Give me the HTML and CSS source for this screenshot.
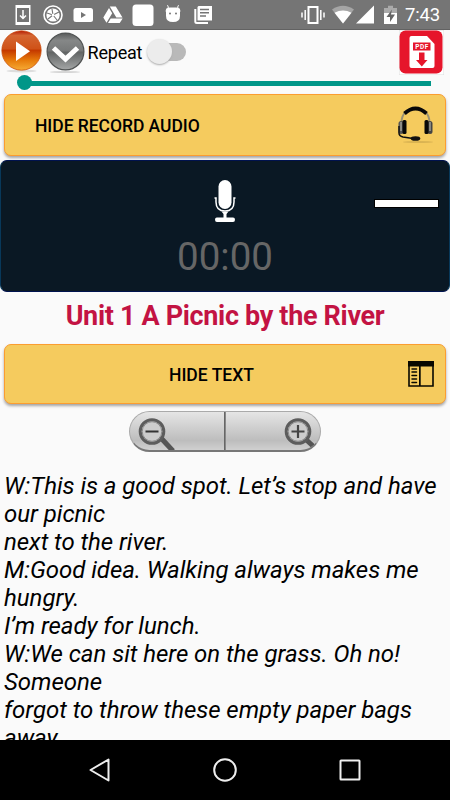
FILE: index.html
```html
<!DOCTYPE html>
<html lang="en">
<head>
<meta charset="utf-8">
<title>Unit 1 A Picnic by the River</title>
<link rel="stylesheet" href="styles.css">
</head>
<body>
<div class="screen">
  <header class="status">
    <div class="notifications">
      <svg viewBox="0 0 30 30"><path d="M7.500 5h15v20h-15zM9 8v14h12V8z" fill="#fff" fill-rule="evenodd"/><path d="M15 10v8M12 15.500l3 3 3-3" fill="none" stroke="#fff" stroke-width="1.500"/></svg>
      <svg viewBox="0 0 30 30"><circle cx="15" cy="15" r="9" fill="none" stroke="#fff" stroke-width="1.600"/><circle cx="15" cy="15" r="6.600" fill="#fff"/><path d="M15 15l-1-6M15 15l6-3M15 15l4 5M15 15l-5 4M15 15l-6-2" stroke="#757575" stroke-width="1.100"/><circle cx="15" cy="15" r="1.300" fill="#fff"/></svg>
      <svg viewBox="0 0 30 30"><rect x="5.500" y="8" width="19.500" height="14" rx="2.500" fill="#fff"/><path d="M13 12v6l5-3z" fill="#757575"/></svg>
      <svg viewBox="0 0 30 30"><path d="M11.800 6.500h6l6.700 11h-6.200zM11 8l3.200 5.300-5.700 9.500-3.200-5.200zM12.700 18.500h12l-3 4.500H10z" fill="#fff"/></svg>
      <svg viewBox="0 0 30 30"><rect x="4.500" y="4.500" width="21" height="21.500" rx="3.500" fill="#fff"/></svg>
      <svg viewBox="0 0 30 30"><path d="M8 11.500q0-3.500 2.500-4l-1-2.300M22 11.500q0-3.500-2.500-4l1-2.300" fill="none" stroke="#fff"/><path d="M8 11q0-3.500 4-3.500h6q4 0 4 3.500v5q0 6-7 6t-7-6z" fill="#fff"/><circle cx="12" cy="13.500" r="1" fill="#757575"/><circle cx="18" cy="13.500" r="1" fill="#757575"/></svg>
      <svg viewBox="0 0 30 30"><path d="M7.300 9v12.500q0 1.500 1.500 1.500H20" fill="none" stroke="#fff" stroke-width="2"/><path d="M10.500 6H24v14.500H9.500V7z" fill="#fff"/><path d="M12 9.500h9M12 12.700h9M12 16h6" stroke="#757575" stroke-width="1.400"/></svg>
    </div>
    <div class="system">
      <svg class="vibrate" viewBox="0 0 24 30"><path d="M7.500 7h9v16h-9z" fill="none" stroke="#fff" stroke-width="2"/><path d="M4.200 10v10M1 12.500v5M19.800 10v10M23 12.500v5" stroke="#fff" stroke-width="1.500"/></svg>
      <svg class="wifi" viewBox="0 0 22 30"><path d="M0 9.500q11-7.500 22 0L11 23.500z" fill="#a5a5a5"/><path d="M2.500 12.700q8.500-4.500 17 0L11 23.500z" fill="#fff"/></svg>
      <svg class="signal" viewBox="0 0 18 30"><path d="M18 5.500v18H0z" fill="#fff"/></svg>
      <svg class="battery" viewBox="0 0 13 30"><path d="M0 8h4V5.800h5V8h4v6H0z" fill="#aaa"/><path d="M0 13h13v11H0z" fill="#fff"/><path d="M8 9.500L2.500 17H6v5l5-7.500H7z" fill="#656565"/></svg>
      <span class="clock">7:43</span>
    </div>
  </header>

  <section class="toolbar">
    <svg class="play" viewBox="0 0 43 43">
      <defs>
        <linearGradient id="orange" x2="0" y2="1"><stop stop-color="#b51b05"/><stop offset=".12" stop-color="#d56632"/><stop offset=".45" stop-color="#cf5218"/><stop offset=".5" stop-color="#c53a00"/><stop offset=".75" stop-color="#e77b0b"/><stop offset="1" stop-color="#f6ac35"/></linearGradient>
        <linearGradient id="gray" x2="0" y2="1"><stop stop-color="#575959"/><stop offset=".2" stop-color="#858787"/><stop offset=".48" stop-color="#777979"/><stop offset=".52" stop-color="#626565"/><stop offset="1" stop-color="#a5a7a7"/></linearGradient>
      </defs>
      <ellipse cx="21.500" cy="41" rx="15" ry="1.500" fill="#ddd"/><circle cx="21.500" cy="20.500" r="19.700" fill="url(#orange)" stroke="#c84a0a" stroke-width=".7"/><path d="M16 11.500v19.500l14-9.700z" fill="#fff"/>
    </svg>
    <svg class="more" viewBox="0 0 43 43"><ellipse cx="22" cy="42" rx="15" ry="1" fill="#d5d5d5"/><circle cx="22.500" cy="21.500" r="18.400" fill="url(#gray)" stroke="#505353" stroke-width="1.200"/><path d="M10.500 18l12 11 12-11" fill="none" stroke="#fff" stroke-width="5"/></svg>
    <span class="repeat">Repeat</span>
    <span class="switch"><span class="knob"></span></span>
    <svg class="pdf" viewBox="0 0 45 45"><path d="M0 0h45v45H0z" fill="#fff" stroke="#ddd"/><rect x=".5" y=".5" width="43" height="43" rx="6" fill="#e6152b"/><path d="M12.500 6h15.500l7.500 8v22q0 2-2 2h-21q-2 0-2-2V8q0-2 2-2z" fill="#fff"/><path d="M14 12.500h17.500v8H14z" fill="#e6152b"/><text x="22.800" y="19" text-anchor="middle" textLength="13" class="pdf-label">PDF</text><path d="M20 22.500h5.500V30h3l-5.700 6.500L17 30h3z" fill="#e6152b"/></svg>
  </section>
  <div class="seek"><span class="thumb"></span><span class="track"></span></div>

  <button class="bar bar-audio"><span>HIDE RECORD AUDIO</span>
    <svg class="headset" viewBox="0 0 38 38"><ellipse cx="21" cy="36" rx="15" ry="1" fill="#d9b352"/><path d="M4.500 17C4-3 33-3 32.500 17" fill="none" stroke="#999173" stroke-width="2"/><path d="M7.500 7.500Q18.500-2.500 29.500 7.500" fill="none" stroke="#080808" stroke-width="3.800"/><rect x="1.500" y="15" width="5" height="13" rx="2.500" fill="#555"/><rect x="5.500" y="14" width="4" height="14" rx="1.500" fill="#080808"/><rect x="30.500" y="15" width="5" height="13" rx="2.500" fill="#444"/><rect x="27.500" y="14" width="4" height="14" rx="1.500" fill="#080808"/><path d="M4 16v9M33 16v9" stroke="#b5b2a5" stroke-width="1.200"/><path d="M2 20v7q0 3 4 4l10 1.500" fill="none" stroke="#111" stroke-width="1.500"/><ellipse cx="18.500" cy="32.500" rx="4.800" ry="2.300" fill="#111"/></svg>
  </button>

  <section class="recorder">
    <svg class="mic" viewBox="0 0 24 44"><rect x="5.500" y="1" width="13" height="29" rx="6.500" fill="#fff"/><path d="M1.500 19h1.500v4q0 9 9 9t9-9v-4h1.500" fill="none" stroke="#fff" stroke-width="1.500"/><path d="M8.500 32.500h7l-2 2.500v3.500H20q2 0 2 2.200T20 43H4q-2 0-2-2.300t2-2.200h6.500V35z" fill="#fff"/></svg>
    <div class="time">00:00</div>
    <span class="level"></span>
  </section>

  <h1>Unit 1 A Picnic by the River</h1>

  <button class="bar bar-text"><span>HIDE TEXT</span>
    <svg class="panel" viewBox="0 0 26 26"><path d="M1 1h24v24H1z" fill="none" stroke="#080800" stroke-width="1.600"/><path d="M0 0h26v5.500H0zM11 5h1.700v20H11z" fill="#080800"/><path d="M4 8h4.500M4 11h4.500M4 14.500h4.500M4 18h4.500M4 21.500h4.500" stroke="#080800" stroke-width="1.500" stroke-linecap="round"/></svg>
  </button>

  <div class="zoom">
    <span class="zoom-out"><svg viewBox="0 0 40 38"><path d="M26 26l12 13" stroke="#555" stroke-width="5"/><circle cx="17" cy="19.500" r="11.800" fill="#ccc" stroke="#5c5c5c" stroke-width="3"/><circle cx="17" cy="19.500" r="9.800" fill="none" stroke="#888"/><path d="M10.500 19.500h13" stroke="#333" stroke-width="2.200"/></svg></span>
    <span class="zoom-in"><svg viewBox="0 0 40 38"><path d="M26.500 28l7.500 7" stroke="#555" stroke-width="5"/><circle cx="18" cy="19.500" r="11.800" fill="#ccc" stroke="#5c5c5c" stroke-width="3"/><circle cx="18" cy="19.500" r="9.800" fill="none" stroke="#888"/><path d="M11.500 19.500h13M18 13v13" stroke="#444" stroke-width="2.200"/></svg></span>
  </div>

  <main class="dialogue">
    <div>W:This is a good spot. Let’s stop and have</div>
    <div>our picnic</div>
    <div>next to the river.</div>
    <div>M:Good idea. Walking always makes me</div>
    <div>hungry.</div>
    <div>I’m ready for lunch.</div>
    <div>W:We can sit here on the grass. Oh no!</div>
    <div>Someone</div>
    <div>forgot to throw these empty paper bags</div>
    <div>away.</div>
  </main>

  <nav>
    <svg viewBox="0 0 30 30"><path d="M23.500 4.500v21L5.500 15z" fill="none" stroke="#eee" stroke-width="2" stroke-linejoin="round"/></svg>
    <svg viewBox="0 0 30 30"><circle cx="15" cy="15" r="10.800" fill="none" stroke="#eee" stroke-width="2"/></svg>
    <svg viewBox="0 0 30 30"><rect x="5.500" y="5.500" width="19" height="19" rx=".5" fill="none" stroke="#eee" stroke-width="2"/></svg>
  </nav>
</div>
</body>
</html>
```
FILE: styles.css
```css
* { box-sizing: border-box; }
body { margin: 0; font-family: Roboto, sans-serif; color: #000; }
svg { display: block; flex: none; }
.screen { width: 450px; height: 800px; overflow: hidden; display: flex; flex-direction: column; background: #fafafa; }
.status { height: 30px; flex: none; display: flex; justify-content: space-between; background: #757575; border-bottom: 1px solid #626262; padding: 0 11px 0 7.5px; }
.notifications, .system { display: flex; height: 30px; }
.notifications svg { width: 30px; height: 30px; }
.system svg { height: 30px; }
.vibrate { width: 24px; margin-right: 7px; }
.wifi { width: 22px; margin-right: 2px; }
.signal { width: 18px; margin-right: 10px; }
.battery { width: 13px; margin-right: 8px; }
.clock { width: 34px; color: #fff; font-size: 18.5px; line-height: 31px; white-space: nowrap; letter-spacing: -.2px; }

.toolbar { height: 44px; flex: none; display: flex; align-items: flex-start; padding-right: 6px; }
.play, .more { width: 43px; height: 43px; }
.repeat { width: 58px; margin-left: 1.5px; font-size: 18px; line-height: 46px; white-space: nowrap; letter-spacing: -.2px; }
.switch { width: 36px; height: 18px; margin: 12.5px 0 0 4px; border-radius: 9px; background: #b9b9b9; }
.knob { display: block; width: 25px; height: 25px; margin: -3.5px 0 0 -3px; border-radius: 50%; background: #ececec; box-shadow: 0 1px 2px #aaa; }
.pdf { width: 45px; height: 45px; margin-left: auto; }
.pdf-label { font: bold 6.5px Roboto, sans-serif; fill: #fff; }
.seek { height: 20px; flex: none; display: flex; align-items: center; padding: 0 19px 3px 16.5px; }
.thumb { width: 15px; height: 15px; border-radius: 50%; background: #009688; }
.track { flex: 1; height: 5px; margin: 2px 0 0 -1px; background: #009688; }

.bar { flex: none; display: flex; align-items: center; margin: 0 4px; border: 1px solid #fb9d30; border-radius: 7px; background: #f5cb5e; box-shadow: 0 2px 3px rgba(0,0,0,.35); font: 500 17.5px Roboto, sans-serif; color: #000; padding: 0; white-space: nowrap; }
.bar span { padding-top: 2px; }
.bar-audio { height: 62px; justify-content: space-between; padding: 0 10px 0 30px; letter-spacing: -.05px; }
.bar-text { height: 60px; justify-content: space-between; padding: 0 11px 0 164px; }
.headset { width: 38px; height: 38px; }
.panel { width: 26px; height: 26px; }

.recorder { height: 132px; flex: none; margin-top: 4px; padding: 18px 10px 0; display: grid; grid-template-columns: 1fr 120px 1fr; grid-template-rows: 44px 1fr; background: #0a1824; border: 1px solid #00124e; border-left-color: #08385a; border-right-color: #08385a; border-radius: 7px; }
.mic { grid-column: 2; grid-row: 1; width: 24px; height: 44px; justify-self: center; }
.level { grid-column: 3; grid-row: 1; width: 65px; height: 9px; margin-top: 20px; justify-self: end; background: #fff; border: 1px solid #000; }
.time { grid-column: 2; grid-row: 2; text-align: center; color: #666; font-size: 38.5px; line-height: 68px; }

h1 { margin: 0; height: 52px; flex: none; text-align: center; color: #c31343; font-size: 27px; font-weight: 700; line-height: 48px; letter-spacing: -.33px; white-space: nowrap; }
.zoom { width: 192px; height: 41px; flex: none; margin: 7px auto 0; display: flex; border: 1px solid #aaa; border-bottom: 2px solid #777; border-radius: 21px; overflow: hidden; background: linear-gradient(#e5e5e5, #bdbdbd 75%, #d0d0d0); }
.zoom span { flex: 0 0 50%; display: flex; }
.zoom-out { padding-left: 5px; border-right: 1px solid #666; }
.zoom-in { justify-content: flex-end; border-left: 1px solid #888; }
.zoom svg { width: 40px; height: 38px; }
.dialogue { flex: 1; min-height: 0; overflow: hidden; padding: 20px 4px 0; font-size: 24px; line-height: 28px; font-style: italic; letter-spacing: -.04px; white-space: nowrap; }
nav { height: 60px; flex: none; background: #000; display: flex; justify-content: center; align-items: center; gap: 95px; }
nav svg { width: 30px; height: 30px; }
```
